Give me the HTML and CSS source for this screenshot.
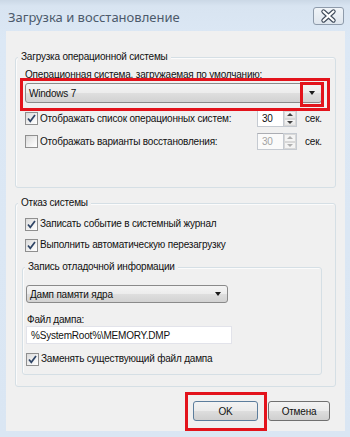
FILE: index.html
```html
<!DOCTYPE html>
<html lang="ru">
<head>
<meta charset="utf-8">
<title>Загрузка и восстановление</title>
<link rel="stylesheet" href="styles.css">
</head>
<body>
<div class="window">
  <div class="titlebar">
    <span class="title">Загрузка и восстановление</span>
    <div class="close">
      <svg width="29" height="16" viewBox="0 0 29 16">
        <path d="M9.5 3.5 L19.5 12.5 M19.5 3.5 L9.5 12.5" stroke="#3f4b5b" stroke-width="4.4" stroke-linecap="round" fill="none"/>
        <path d="M9.5 3.5 L19.5 12.5 M19.5 3.5 L9.5 12.5" stroke="#ffffff" stroke-width="2.2" stroke-linecap="round" fill="none"/>
      </svg>
    </div>
  </div>
  <div class="client">
    <section class="group g1">
      <div class="gtitle">Загрузка операционной системы</div>
      <div class="label">Операционная система, загружаемая по умолчанию:</div>
      <div class="combo big">
        <span class="combo-text">Windows 7</span>
        <span class="arrow"></span>
        <span class="hl hl-combo"></span>
        <span class="hl hl-arrow"></span>
      </div>
      <div class="row r1">
        <span class="cb checked"><svg width="11" height="11" viewBox="0 0 11 11"><path d="M2 5.5 L4.3 8.3 L9 2" stroke="#2f4566" stroke-width="1.7" fill="none"/></svg></span>
        <span class="txt">Отображать список операционных систем:</span>
        <span class="spin">
          <span class="spin-input">30</span>
          <span class="spin-btns"><span class="sb up"></span><span class="sb down"></span></span>
        </span>
        <span class="sec">сек.</span>
      </div>
      <div class="row r2 disabled">
        <span class="cb"></span>
        <span class="txt">Отображать варианты восстановления:</span>
        <span class="spin">
          <span class="spin-input">30</span>
          <span class="spin-btns"><span class="sb up"></span><span class="sb down"></span></span>
        </span>
        <span class="sec">сек.</span>
      </div>
    </section>

    <section class="group g2">
      <div class="gtitle">Отказ системы</div>
      <div class="crow first">
        <span class="cb checked"><svg width="11" height="11" viewBox="0 0 11 11"><path d="M2 5.5 L4.3 8.3 L9 2" stroke="#2f4566" stroke-width="1.7" fill="none"/></svg></span>
        <span class="txt">Записать событие в системный журнал</span>
      </div>
      <div class="crow">
        <span class="cb checked"><svg width="11" height="11" viewBox="0 0 11 11"><path d="M2 5.5 L4.3 8.3 L9 2" stroke="#2f4566" stroke-width="1.7" fill="none"/></svg></span>
        <span class="txt">Выполнить автоматическую перезагрузку</span>
      </div>
      <section class="group g3">
        <div class="gtitle">Запись отладочной информации</div>
        <div class="combo small">
          <span class="combo-text">Дамп памяти ядра</span>
          <span class="arrow"></span>
        </div>
        <div class="label2">Файл дампа:</div>
        <div class="input">%SystemRoot%\MEMORY.DMP</div>
        <div class="crow last">
          <span class="cb checked"><svg width="11" height="11" viewBox="0 0 11 11"><path d="M2 5.5 L4.3 8.3 L9 2" stroke="#2f4566" stroke-width="1.7" fill="none"/></svg></span>
          <span class="txt">Заменять существующий файл дампа</span>
        </div>
      </section>
    </section>

    <div class="buttons">
      <div class="btn ok">OK<span class="hl hl-ok"></span></div>
      <div class="btn cancel">Отмена</div>
    </div>
  </div>
</div>
</body>
</html>
```
FILE: styles.css
```css
* { box-sizing: border-box; }
html, body { margin: 0; padding: 0; }
body {
  width: 350px;
  height: 437px;
  overflow: hidden;
  background: #dae6f3;
  font-family: "Liberation Sans", Arial, sans-serif;
  font-size: 10px;
  letter-spacing: -0.2px;
  color: #111;
}
.window {
  display: flex;
  flex-direction: column;
  height: 437px;
  padding: 0 5px 6px 6px;
  background: linear-gradient(#cbd8e6 0, #d8e4f1 6px, #dce8f5 40px, #dae6f3 100%);
}
.titlebar {
  flex: none;
  height: 31px;
  display: flex;
  justify-content: space-between;
  align-items: flex-start;
}
.title {
  margin: 9px 0 0 2px;
  font-family: "Noto Sans", "Open Sans", sans-serif;
  font-size: 13px;
  letter-spacing: 0;
  line-height: 16px;
  color: #4c5a6b;
}
.close {
  margin: 7px 1px 0 0;
  width: 31px;
  height: 18px;
  border: 1px solid #8e9bab;
  border-radius: 3px;
  background: linear-gradient(#f0f4f8, #dfe6ee);
  display: flex;
  align-items: center;
  justify-content: center;
}
.close svg { display: block; }
.client {
  flex: 1;
  background: #f0f0f0;
  padding: 26px 9px 0 9px;
  display: flex;
  flex-direction: column;
}
.client > * { flex: none; }
.group {
  border: 1px solid #d5dfe5;
  border-radius: 3px;
  box-shadow: inset 1px 1px 0 #fbfbfb;
}
.gtitle {
  width: fit-content;
  margin: -8px 0 0 -7px;
  padding: 0 3px;
  line-height: 14px;
  background: #f0f0f0;
  color: #111;
}
.g1 { padding: 0 0 37px 9px; }
.label { margin-top: 4px; line-height: 14px; }
.combo {
  position: relative;
  display: flex;
  align-items: center;
  border: 1px solid #8a8a8a;
  border-radius: 3px;
  background: linear-gradient(#f4f4f4 0, #ececec 48%, #dedede 52%, #d2d2d2 100%);
  padding-left: 3px;
}
.combo.big { margin-top: 1px; width: 297px; height: 20px; }
.combo.small { margin-top: 11px; width: 202px; height: 18px; }
.combo-text { flex: 1; }
.arrow {
  width: 0;
  height: 0;
  border-left: 3.5px solid transparent;
  border-right: 3.5px solid transparent;
  border-top: 4px solid #1a1a1a;
  margin-right: 6px;
}
.hl {
  position: absolute;
  border: 3px solid #e3131b;
  pointer-events: none;
}
.hl-combo { left: -6px; top: -6px; right: -9px; bottom: -9px; }
.hl-arrow { left: 274px; top: -2px; width: 24px; height: 25px; }
.row {
  display: flex;
  align-items: center;
  height: 17px;
}
.r1 { margin-top: 7px; }
.r2 { margin-top: 6px; }
.cb {
  flex: none;
  width: 13px;
  height: 13px;
  border: 1px solid #8f8f8f;
  background: linear-gradient(135deg, #dadada, #f6f6f6 70%, #ffffff);
  margin-right: 2px;
  display: flex;
  align-items: center;
  justify-content: center;
}
.cb svg { display: block; }
.txt { flex: 1; line-height: 14px; white-space: nowrap; }
.spin { display: flex; width: 40px; height: 17px; flex: none; }
.spin-input {
  width: 26px;
  height: 17px;
  background: #fff;
  border: 1px solid #c5cad1;
  border-top-color: #abadb3;
  border-right: none;
  padding-left: 4px;
  display: flex;
  align-items: center;
}
.spin-btns {
  width: 14px;
  display: flex;
  flex-direction: column;
  border: 1px solid #c5cad1;
  background: #fff;
}
.sb {
  flex: 1;
  display: flex;
  align-items: center;
  justify-content: center;
  background: linear-gradient(#f6f6f6, #e6e6e6);
  border: 1px solid #d8d8d8;
}
.sb.up::after {
  content: "";
  border-left: 3px solid transparent;
  border-right: 3px solid transparent;
  border-bottom: 3px solid #404040;
}
.sb.down::after {
  content: "";
  border-left: 3px solid transparent;
  border-right: 3px solid transparent;
  border-top: 3px solid #404040;
}
.sec { width: 30px; margin-left: 8px; flex: none; }
.disabled .spin-input { color: #a3a3a3; background: #fafafa; }
.disabled .sb.up::after { border-bottom-color: #b0b0b0; }
.disabled .sb.down::after { border-top-color: #b0b0b0; }
.disabled .sb { background: #f4f4f4; }

.g2 { margin-top: 15px; padding: 0 13px 11px 9px; }
.crow {
  display: flex;
  align-items: center;
  height: 14px;
  margin-top: 7px;
}
.g3 { margin: 15px 0 0 -3px; padding: 0 0 8px 3px; }
.g3 .gtitle { margin-left: -1px; }
.label2 { margin-top: 11px; line-height: 12px; padding-left: 1px; }
.input {
  width: 206px;
  height: 18px;
  background: #fff;
  border: 1px solid #e2e3ea;
  padding-left: 4px;
  display: flex;
  align-items: center;
}
.crow.last { margin-top: 8px; }

.buttons {
  margin-top: 14px;
  height: 20px;
  display: flex;
  justify-content: flex-end;
  gap: 10px;
  padding-right: 6px;
}
.btn {
  position: relative;
  height: 20px;
  border: 1px solid #707070;
  border-radius: 3px;
  background: linear-gradient(#f3f3f3 0, #ebebeb 48%, #dddddd 52%, #cfcfcf 100%);
  display: flex;
  align-items: center;
  justify-content: center;
}
.ok { width: 65px; border-color: #5c7d9c; }
.cancel { width: 62px; }
.hl-ok { left: -9px; top: -10px; right: -10px; bottom: -11px; }
```
